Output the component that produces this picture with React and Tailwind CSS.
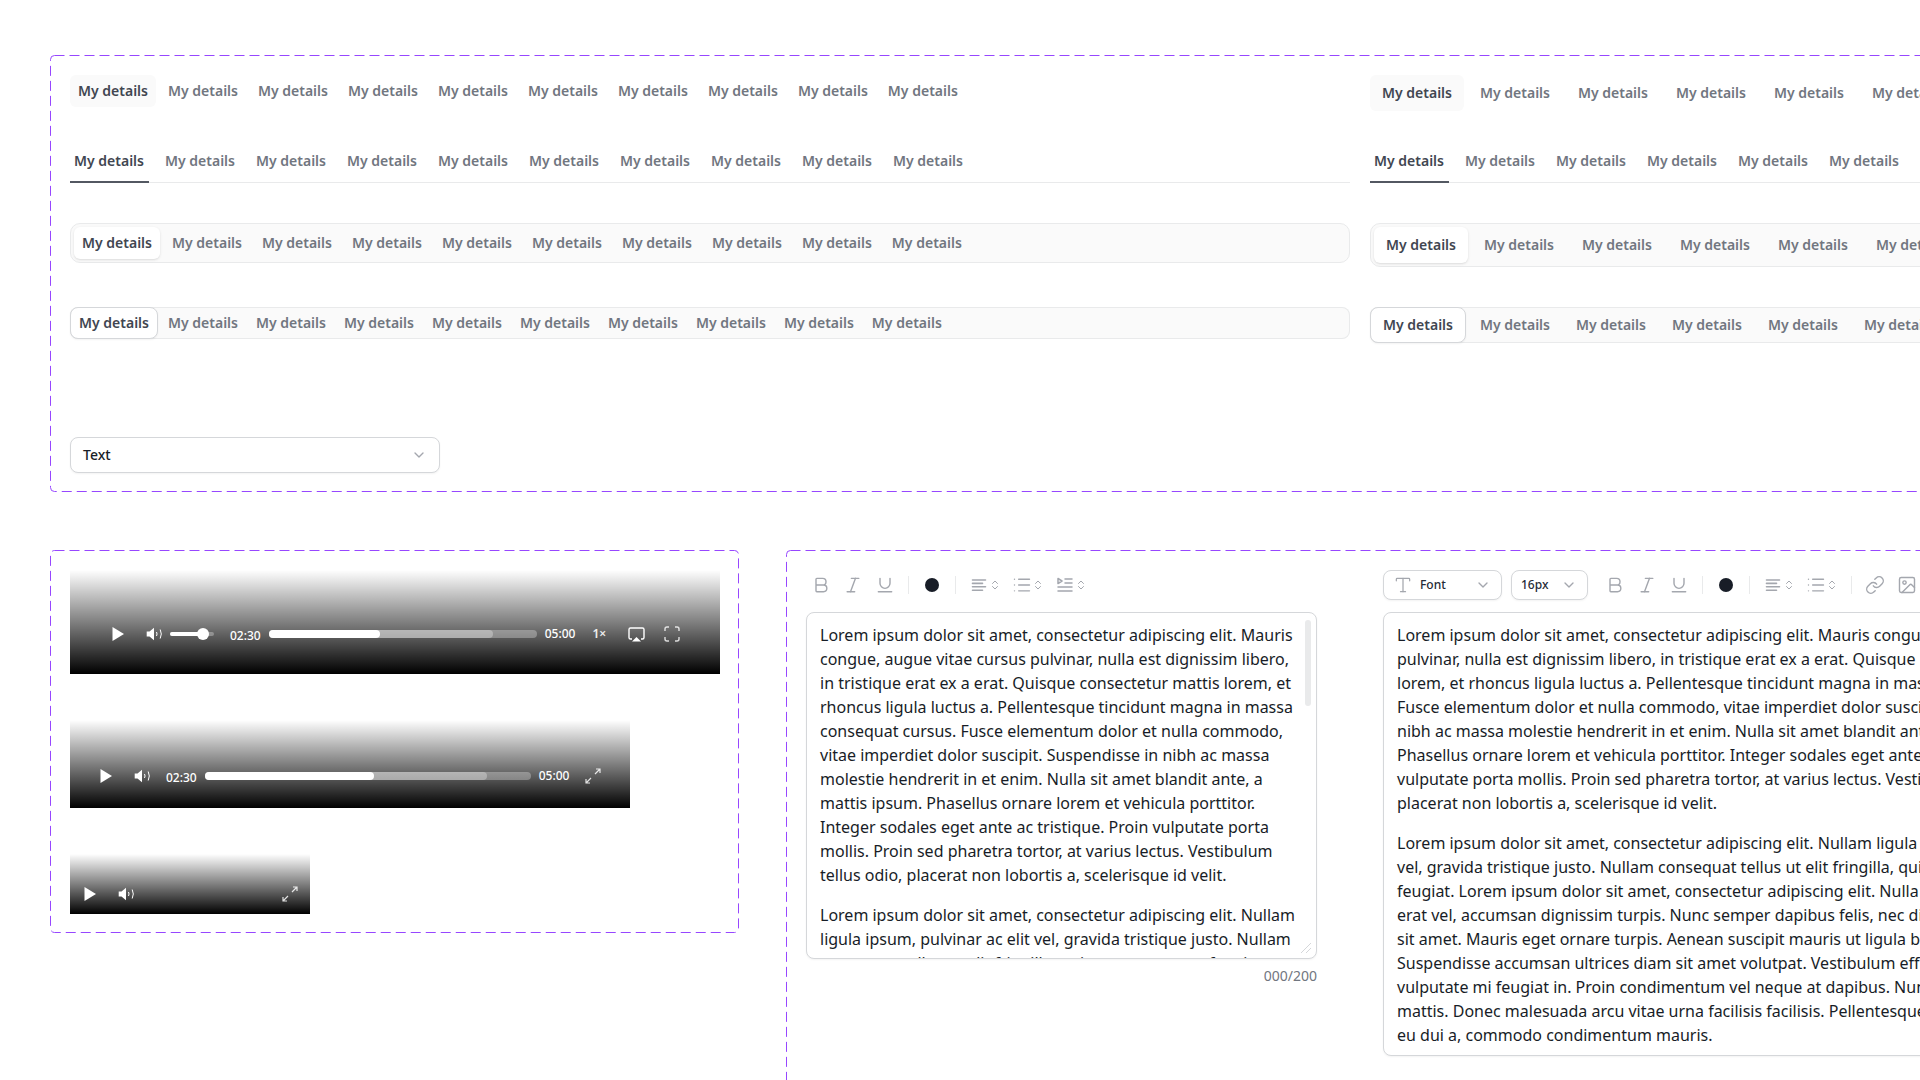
import { Bold, ChevronDown, ChevronsUpDown, Image, Italic, Link, List, Type, Underline } from "lucide-react";

const TABS = Array.from({ length: 10 }, (_, i) => i)

const PARA_LEFT_1 = "Lorem ipsum dolor sit amet, consectetur adipiscing elit. Mauris congue, augue vitae cursus pulvinar, nulla est dignissim libero, in tristique erat ex a erat. Quisque consectetur mattis lorem, et rhoncus ligula luctus a. Pellentesque tincidunt magna in massa consequat cursus. Fusce elementum dolor et nulla commodo, vitae imperdiet dolor suscipit. Suspendisse in nibh ac massa molestie hendrerit in et enim. Nulla sit amet blandit ante, a mattis ipsum. Phasellus ornare lorem et vehicula porttitor. Integer sodales eget ante ac tristique. Proin vulputate porta mollis. Proin sed pharetra tortor, at varius lectus. Vestibulum tellus odio, placerat non lobortis a, scelerisque id velit."
const PARA_LEFT_2 = "Lorem ipsum dolor sit amet, consectetur adipiscing elit. Nullam ligula ipsum, pulvinar ac elit vel, gravida tristique justo. Nullam consequat tellus ut elit fringilla, quis semper neque feugiat."

const LINES_RIGHT_1 = [
  "Lorem ipsum dolor sit amet, consectetur adipiscing elit. Mauris congue, augue vitae cursus",
  "pulvinar, nulla est dignissim libero, in tristique erat ex a erat. Quisque consectetur mattis",
  "lorem, et rhoncus ligula luctus a. Pellentesque tincidunt magna in massa consequat cursus.",
  "Fusce elementum dolor et nulla commodo, vitae imperdiet dolor suscipit. Suspendisse in",
  "nibh ac massa molestie hendrerit in et enim. Nulla sit amet blandit ante, a mattis ipsum.",
  "Phasellus ornare lorem et vehicula porttitor. Integer sodales eget ante ac tristique. Proin",
  "vulputate porta mollis. Proin sed pharetra tortor, at varius lectus. Vestibulum tellus odio,",
  "placerat non lobortis a, scelerisque id velit.",
]
const LINES_RIGHT_2 = [
  "Lorem ipsum dolor sit amet, consectetur adipiscing elit. Nullam ligula ipsum, pulvinar ac elit",
  "vel, gravida tristique justo. Nullam consequat tellus ut elit fringilla, quis semper neque",
  "feugiat. Lorem ipsum dolor sit amet, consectetur adipiscing elit. Nulla facilisi. Sed mollis",
  "erat vel, accumsan dignissim turpis. Nunc semper dapibus felis, nec dictum nisi tempor",
  "sit amet. Mauris eget ornare turpis. Aenean suscipit mauris ut ligula blandit, at porta",
  "Suspendisse accumsan ultrices diam sit amet volutpat. Vestibulum efficitur nisl sed",
  "vulputate mi feugiat in. Proin condimentum vel neque at dapibus. Nunc quis lectus in",
  "mattis. Donec malesuada arcu vitae urna facilisis facilisis. Pellentesque vitae lacus",
  "eu dui a, commodo condimentum mauris.",
]

// figma style dashed frame
const DashedFrame = () => (
  <svg className="absolute inset-0 w-full h-full pointer-events-none overflow-visible">
    <rect x="0.5" y="0.5" rx="4" fill="none" stroke="#9747ff" strokeDasharray="10 5" className="w-[calc(100%-1px)] h-[calc(100%-1px)]" />
  </svg>
)

const PlainTabs = ({ large }) => (
  <div className="flex gap-1">
    {TABS.map(i => (
      <div key={i} className={`flex items-center text-sm leading-5 font-semibold rounded-md ${large ? "h-9 px-3" : "h-8 px-2"} ${i === 0 ? "bg-[#fafafa] text-[#414651]" : "text-[#717680]"}`}>My details</div>
    ))}
  </div>
)

const UnderlineTabs = ({ large }) => (
  <div className={`flex h-8 border-b border-[#e9eaeb] ${large ? "gap-[12px]" : "gap-3"}`}>
    {TABS.map(i => (
      <div key={i} className={`h-8 -mb-px shrink-0 pb-[10px] text-sm leading-5 font-semibold border-b-2 ${large ? "px-1 w-[79px]" : "px-1 w-[79px]"} ${i === 0 ? "border-[#535862] text-[#414651]" : "border-transparent text-[#717680]"}`}>My details</div>
    ))}
  </div>
)

const PillTabs = ({ large }) => (
  <div className={`flex gap-1 p-[3px] bg-[#fafafa] border border-[#e9eaeb] rounded-[10px] ${large ? "h-11" : "h-10"}`}>
    {TABS.map(i => (
      <div key={i} className={`flex items-center shrink-0 text-sm leading-5 font-semibold rounded-md ${large ? "h-9 px-3" : "h-8 px-2"} ${i === 0 ? "bg-white shadow-sm text-[#414651]" : "text-[#717680]"}`}>My details</div>
    ))}
  </div>
)

const BoxTabs = ({ large }) => (
  <div className={`flex gap-0.5 bg-[#fafafa] rounded-lg shadow-[inset_0_0_0_1px_#e9eaeb] ${large ? "h-9" : "h-8"}`}>
    {TABS.map(i => (
      <div key={i} className={`flex items-center shrink-0 text-sm leading-5 font-semibold rounded-lg ${large ? "px-3" : "px-2"} ${i === 0 ? "bg-white border border-[#d5d7da] shadow-xs text-[#414651]" : "text-[#717680]"}`}>My details</div>
    ))}
  </div>
)

const PlayIcon = () => (
  <svg width="24" height="24" viewBox="0 0 24 24" className="shrink-0"><path d="M6.5 5 18 12 6.5 19Z" fill="#fff" /></svg>
)
const VolumeIcon = () => (
  <svg width="24" height="24" viewBox="0 0 24 24" fill="none" className="shrink-0">
    <path d="M4.7 9.5H7.5L12 5.8V18.2L7.5 14.5H4.7Z" fill="#fff" />
    <path d="M14.5 10q1.1 2 0 4M18.2 7.5q2.2 4.5 0 9" stroke="#fff" strokeWidth="1" />
  </svg>
)
const AirplayIcon = () => (
  <svg width="24" height="24" viewBox="0 0 24 24" fill="none" className="shrink-0">
    <path d="M8 17H6.5A1.5 1.5 0 0 1 5 15.5V7.5A1.5 1.5 0 0 1 6.5 6H18.5A1.5 1.5 0 0 1 20 7.5V15.5A1.5 1.5 0 0 1 18.5 17H17" stroke="#fff" strokeWidth="1.4" />
    <path d="M12.5 15 17 19.5H8Z" fill="#fff" />
  </svg>
)
const FullscreenIcon = () => (
  <svg width="24" height="24" viewBox="0 0 24 24" fill="none" stroke="#fff" strokeOpacity="0.8" strokeWidth="1.4" className="shrink-0">
    <path d="M5 9V7A2 2 0 0 1 7 5H9M15 5H17A2 2 0 0 1 19 7V9M19 15V17A2 2 0 0 1 17 19H15M9 19H7A2 2 0 0 1 5 17V15" />
  </svg>
)
const ExpandIcon = () => (
  <svg width="24" height="24" viewBox="0 0 24 24" fill="none" stroke="#fff" strokeOpacity="0.85" strokeWidth="1.2" className="shrink-0">
    <path d="M14 10 19 5M15 5H19V9M10 14 5 19M5 15V19H9" />
  </svg>
)

const Time = ({ children }) => <span className="text-xs leading-5 font-medium text-white shrink-0">{children}</span>

const Progress = ({ width, buffered, played }) => (
  <div className="relative mx-2 h-2 rounded-full bg-white/30 shrink-0" style={{ width }}>
    <div className="absolute left-0 top-0 h-2 rounded-full bg-white/30" style={{ width: buffered }}></div>
    <div className="absolute left-0 top-0 h-2 rounded-full bg-white" style={{ width: played }}></div>
  </div>
)

const VideoBar = () => (
  <div className="flex items-end w-[650px] h-[104px] pl-9 pb-[28px] bg-[linear-gradient(180deg,rgba(0,0,0,0),#000)]">
    <div className="flex items-center h-6">
      <PlayIcon />
      <div className="ml-3"><VolumeIcon /></div>
      <div className="relative ml-1 w-[44px] h-1 rounded-full bg-white/30 shrink-0">
        <div className="h-1 w-[33px] rounded-full bg-white"></div>
        <div className="absolute left-[27px] -top-1 w-3 h-3 rounded-full bg-white"></div>
      </div>
      <div className="ml-4"><Time>02:30</Time></div>
      <Progress width={268} buffered={224} played={111} />
      <Time>05:00</Time>
      <span className="ml-[17px] text-xs leading-5 font-semibold text-white/90">1×</span>
      <div className="ml-[18px]"><AirplayIcon /></div>
      <div className="ml-3"><FullscreenIcon /></div>
    </div>
  </div>
)

const VideoBarMedium = () => (
  <div className="flex items-end w-[560px] h-[88px] pl-6 pb-5 bg-[linear-gradient(180deg,rgba(0,0,0,0),#000)]">
    <div className="flex items-center h-6">
      <PlayIcon />
      <div className="ml-3"><VolumeIcon /></div>
      <div className="ml-3"><Time>02:30</Time></div>
      <Progress width={326} buffered={282} played={169} />
      <Time>05:00</Time>
      <div className="ml-3"><ExpandIcon /></div>
    </div>
  </div>
)

const VideoBarSmall = () => (
  <div className="flex items-end justify-between w-[240px] h-[60px] px-2 pb-2 bg-[linear-gradient(180deg,rgba(0,0,0,0),#000)]">
    <div className="flex items-center gap-3 h-6">
      <PlayIcon />
      <VolumeIcon />
    </div>
    <ExpandIcon />
  </div>
)

const Divider = () => <div className="w-px h-[18px] bg-[#e9eaeb] shrink-0"></div>

const AlignIcon = () => (
  <svg width="20" height="20" viewBox="0 0 20 20" fill="none" stroke="#a4a7ae" strokeWidth="1.6" strokeLinecap="round" className="shrink-0">
    <path d="M3.5 5H16.5M3.5 8.4H13.5M3.5 11.8H16.5M3.5 15.2H13.5" />
  </svg>
)
const IndentIcon = () => (
  <svg width="20" height="20" viewBox="0 0 20 20" fill="none" stroke="#a4a7ae" strokeWidth="1.5" strokeLinecap="round" className="shrink-0">
    <path d="M3 3.5 7 6 3 8.5ZM10 4H17M10 8H17M3 12H17M3 16H17" strokeLinejoin="round" />
  </svg>
)

const Stepper = ({ children }) => (
  <div className="flex items-center">
    {children}
    <ChevronsUpDown size={12} strokeWidth={2} className="text-[#a4a7ae] shrink-0" />
  </div>
)

const Toolbar = ({ full }) => (
  <div className="flex items-center h-[30px]">
    <div className="flex items-center gap-3 text-[#a4a7ae]">
      <Bold size={20} strokeWidth={1.7} />
      <Italic size={20} strokeWidth={1.7} />
      <Underline size={20} strokeWidth={1.7} />
    </div>
    <div className="ml-[13px]"><Divider /></div>
    <div className="flex items-center justify-center w-[46px]">
      <div className="w-[14px] h-[14px] rounded-full bg-[#181d27]"></div>
    </div>
    <Divider />
    <div className="ml-[13px] flex items-center gap-[11px]">
      <Stepper><AlignIcon /></Stepper>
      <Stepper><List size={20} strokeWidth={1.7} className="text-[#a4a7ae]" /></Stepper>
      {!full && <Stepper><IndentIcon /></Stepper>}
    </div>
    {full && (
      <>
        <div className="ml-[13px]"><Divider /></div>
        <div className="ml-[13px] flex items-center gap-3 text-[#a4a7ae]">
          <Link size={20} strokeWidth={1.7} />
          <Image size={20} strokeWidth={1.7} />
        </div>
      </>
    )}
  </div>
)

const MiniSelect = ({ className, icon, label }) => (
  <div className={`flex items-center justify-between h-[30px] pl-[9px] pr-[10px] bg-white border border-[#d5d7da] rounded-lg shadow-xs shrink-0 ${className}`}>
    <div className="flex items-center gap-[7px] text-xs font-medium text-[#252b37]">
      {icon}
      {label}
    </div>
    <ChevronDown size={16} className="text-[#a4a7ae]" />
  </div>
)

const App = () => {
  return (
    <div className="w-[1920px] h-[1080px] overflow-hidden bg-white pl-[50px] pt-[55px] font-['Noto_Sans',sans-serif]">
      {/* Tabs */}
      <div className="relative w-[2400px] pl-5 pt-5 pb-[19px]">
        <DashedFrame />
        <div className="grid grid-cols-[1280px_1000px] grid-rows-[36px_32px_44px_36px] gap-x-5 gap-y-10 items-start">
          <PlainTabs />
          <PlainTabs large />
          <UnderlineTabs />
          <UnderlineTabs large />
          <PillTabs />
          <PillTabs large />
          <BoxTabs />
          <BoxTabs large />
        </div>
        <div className="mt-[94px] flex items-center justify-between w-[370px] h-9 px-3 bg-white border border-[#d5d7da] rounded-lg shadow-xs">
          <span className="text-sm font-medium text-[#181d27]">Text</span>
          <ChevronDown size={16} className="text-[#a4a7ae]" />
        </div>
      </div>

      <div className="flex items-start gap-[47px] mt-[58px]">
        {/* Video */}
        <div className="relative flex flex-col gap-[46px] w-[689px] h-[383px] pl-5 pt-5 shrink-0">
          <DashedFrame />
          <VideoBar />
          <VideoBarMedium />
          <VideoBarSmall />
        </div>

        {/* Editors */}
        <div className="relative flex gap-[66px] w-[1400px] h-[620px] pl-5 pt-5 shrink-0">
          <DashedFrame />
          <div className="w-[511px] shrink-0">
            <div className="ml-[5px]"><Toolbar /></div>
            <div className="relative mt-3 h-[347px] pl-[13px] pt-[10px] overflow-hidden bg-white border border-[#d5d7da] rounded-lg shadow-xs">
              <div className="w-[484px] text-base leading-6 text-[#181d27]">
                <p>{PARA_LEFT_1}</p>
                <p className="mt-4">{PARA_LEFT_2}</p>
              </div>
              <div className="absolute right-[5px] top-[7px] w-[6px] h-[86px] rounded-full bg-[#e9eaeb]"></div>
              <svg width="10" height="10" viewBox="0 0 10 10" fill="none" stroke="#d5d7da" className="absolute right-[5px] bottom-[5px] bg-white">
                <path d="M0 10 10 0M5 10 10 5" />
              </svg>
            </div>
            <div className="mt-[7px] text-sm leading-5 text-right text-[#717680]">000/200</div>
          </div>
          <div className="w-[760px] shrink-0">
            <div className="flex items-center">
              <MiniSelect className="w-[119px]" icon={<Type size={20} strokeWidth={1.5} className="text-[#a4a7ae]" />} label="Font" />
              <MiniSelect className="ml-[9px] w-[77px]" label="16px" />
              <div className="ml-[17px]"><Toolbar full /></div>
            </div>
            <div className="mt-3 h-[444px] pl-[13px] pt-[10px] overflow-hidden bg-white border border-[#d5d7da] rounded-lg shadow-xs text-base leading-6 text-[#181d27] whitespace-nowrap">
              {LINES_RIGHT_1.map(line => <div key={line}>{line}</div>)}
              <div className="mt-4">
                {LINES_RIGHT_2.map(line => <div key={line}>{line}</div>)}
              </div>
            </div>
          </div>
        </div>
      </div>
    </div>
  )
}

export default App
